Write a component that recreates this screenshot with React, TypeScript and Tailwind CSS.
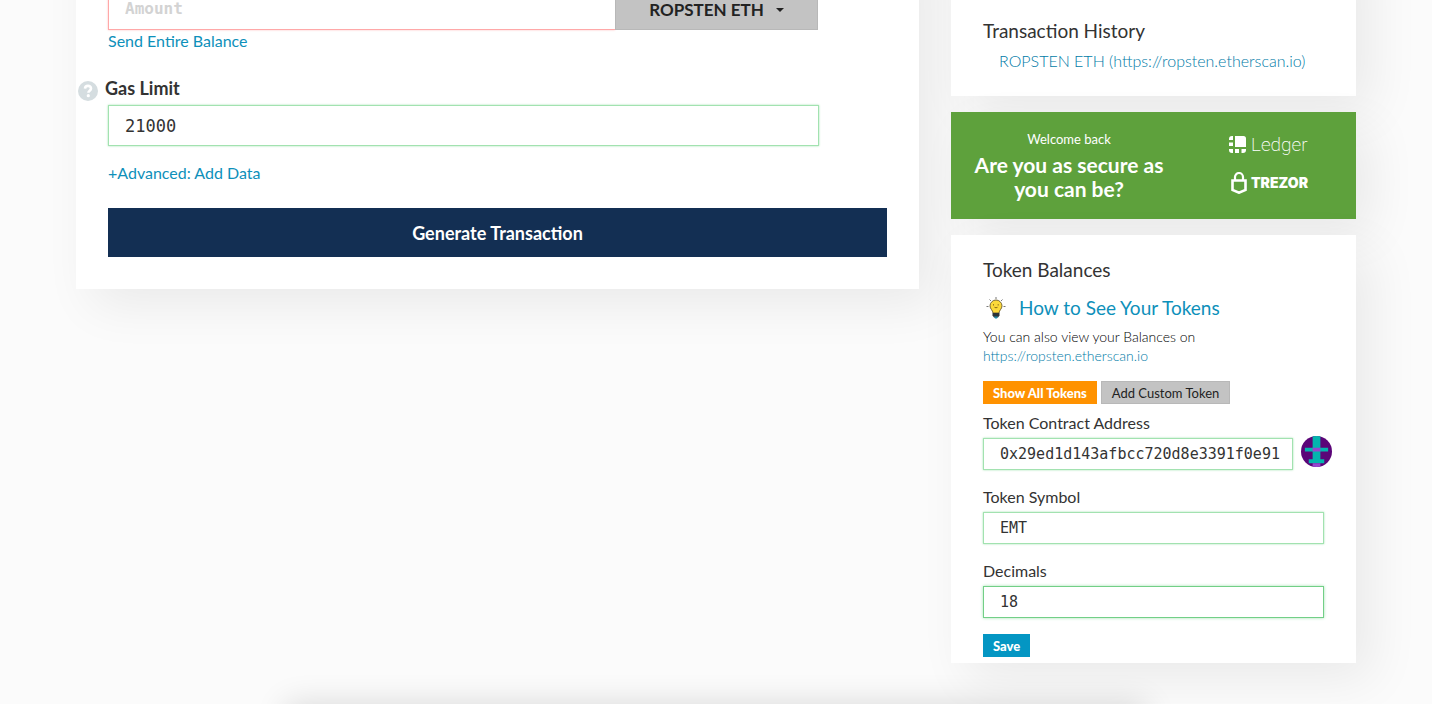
import React from "react";

const cardShadow = "shadow-[16px_16px_47px_0_rgba(0,0,0,0.07)]";
const link = "text-[#0e90ba] hover:underline";
const lightLink = "text-[#007ba7] hover:underline";
const field =
  "block w-full border border-[#a2e2b0] bg-white pr-2 pl-4 font-['DejaVu_Sans_Mono',monospace] text-[#333] shadow-[0_0_2px_0_#a2e2b0] outline-none";
const smallField = field + " h-8 text-[15px]";

function HelpIcon() {
  return (
    <svg viewBox="0 0 20 20" className="size-5" aria-hidden="true">
      <circle cx="10" cy="10" r="10" fill="#d5dde0" />
      <path d="M7 7.6C7.1 5.800 8.300 4.900 10 4.900s3 1 3 2.600c0 2.200-2.600 2.200-2.600 4.300" fill="none" stroke="#fff" strokeWidth="2.600" />
      <circle cx="10.300" cy="14.700" r="1.600" fill="#fff" />
    </svg>
  );
}

function BulbIcon() {
  return (
    <svg viewBox="0 0 20 22" className="h-[22px] w-5" aria-hidden="true">
      <g stroke="#777" strokeWidth="1">
        <path d="M10 0v2M3.500 2.500l1.500 1.500M16.500 2.500L15 4M.5 9.500h2M17.500 9.500h2" />
      </g>
      <path d="M10 3a6 6 0 0 0-6 5.900c0 3 2.800 4.300 3 7.100h6c.2-2.800 3-4.100 3-7.100A6 6 0 0 0 10 3z" fill="#fcd93a" stroke="#6b5a2c" strokeWidth=".9" />
      <path d="M7.500 7.200v1.300M12.200 7.200v1.300M8.500 10.300q1.500 1 3 0" fill="none" stroke="#7a5b12" strokeWidth=".9" />
      <path d="M6.500 16h7v2.500L12 20.500H8L6.500 18.500z" fill="#2b3338" />
      <path d="M8 19.500h4l-1 2H9z" fill="#1d8aa8" />
    </svg>
  );
}

function Identicon() {
  return (
    <svg viewBox="0 0 8 8" className="-mt-0.5 size-[31px] shrink-0 rounded-full" role="img" aria-label="Address icon">
      <path fill="#5b0578" d="M0 0h8v8H0z" />
      <path fill="#04b5ae" d="M3 0h2v7H3zM1 3h6v1H1zM2 6h4v1H2z" />
      <path fill="#9647cf" d="M3 3h2v1H3zM3 7h2v1H3z" />
    </svg>
  );
}

function LedgerLogo() {
  return (
    <div className="flex h-6 items-center gap-[5px]">
      <svg viewBox="0 0 17 17" className="size-[17px]" fill="#fff" aria-hidden="true">
        <path d="M6 0h8.500A2.500 2.500 0 0 1 17 2.500V11H6zM3 0h1v4H0V3a3 3 0 0 1 3-3zM0 6.500h4V10H0zM0 13h4v4H3a3 3 0 0 1-3-3zM6 13h4v4H6zM12.500 13H17v1a3 3 0 0 1-3 3h-1.500z" />
      </svg>
      <span className="font-[Roboto,sans-serif] text-[19px] leading-6 font-extralight">Ledger</span>
    </div>
  );
}

function TrezorLogo() {
  return (
    <div className="flex h-6 items-center gap-1 pl-0.5">
      <svg viewBox="0 0 16 22" className="h-[22px] w-4" fill="none" stroke="#fff" aria-hidden="true">
        <path d="M4 8.500V5a4 4 0 0 1 8 0v3.500" strokeWidth="2.200" />
        <path d="M1.500 8.500h13v9.500L8 20.700 1.500 18z" strokeWidth="2.600" />
      </svg>
      <span className="font-[Inter,sans-serif] text-sm leading-6 font-black">TREZOR</span>
    </div>
  );
}

export default function App() {
  return (
    <div className="flex min-h-screen flex-col overflow-hidden bg-[#fbfbfb] font-[Lato,sans-serif] text-[#333]">
      <div className="flex items-start gap-8 px-[76px]">
        <main className={"-mt-16 min-w-0 flex-1 bg-white px-8 pt-[52px] pb-8 " + cardShadow}>
          <div className="mr-[69px] flex h-[42px]">
            <input
              aria-label="Amount"
              placeholder="Amount"
              className="min-w-0 flex-1 border border-r-0 border-[#ffa8a8] bg-white px-4 font-['DejaVu_Sans_Mono',monospace] text-base font-bold shadow-[0_0_2px_0_#ffc0c0] outline-none placeholder:text-[#d3d3d3]"
            />
            <button className="flex w-[203px] items-center justify-center gap-3 border border-[#b8b8b8] bg-[#c3c3c3] text-[17px] leading-none font-bold text-[#222]">
              ROPSTEN ETH
              <svg viewBox="0 0 8 4" className="mt-0.5 h-1 w-2" fill="#222" aria-hidden="true">
                <path d="M0 0h8L4 4z" />
              </svg>
            </button>
          </div>
          <a href="#balance" className={"block w-fit text-base leading-[22px] " + link}>
            Send Entire Balance
          </a>
          <div className="mt-[26px] -ml-8 flex h-[27px] items-start gap-[7px] pl-0.5">
            <button aria-label="Help" className="pt-[3px]">
              <HelpIcon />
            </button>
            <label htmlFor="gas" className="text-lg leading-5 font-bold">
              Gas Limit
            </label>
          </div>
          <div className="mr-[68px]">
            <input id="gas" defaultValue="21000" className={field + " h-[41px] text-[17px]"} />
          </div>
          <a href="#data" className={"mt-4 block w-fit text-base leading-[22px] " + link}>
            +Advanced: Add Data
          </a>
          <button className="mt-6 block h-[49px] w-full bg-[#132f53] text-lg font-bold text-white">
            Generate Transaction
          </button>
        </main>

        <aside className="flex w-[405px] shrink-0 flex-col gap-4">
          <section className={"-mt-16 bg-white px-8 pt-[82px] pb-[18px] " + cardShadow}>
            <h2 className="text-[19px] leading-[26px]">Transaction History</h2>
            <a href="#history" className={"ml-4 block text-base leading-[34px] font-light " + lightLink}>
              ROPSTEN ETH (https://ropsten.etherscan.io)
            </a>
          </section>

          <section className={"flex h-[107px] items-center bg-[#5ea13c] text-white " + cardShadow}>
            <div className="w-[236px] pb-0.5 text-center">
              <p className="text-[13px] leading-5">Welcome back</p>
              <p className="mt-1 text-[21px] leading-6 font-bold">
                Are you as secure as
                <br />
                you can be?
              </p>
            </div>
            <div className="ml-[42px] flex flex-col gap-3.5 pb-1">
              <LedgerLogo />
              <TrezorLogo />
            </div>
          </section>

          <section className={"bg-white px-8 pt-5 pb-1.5 " + cardShadow}>
            <h2 className="text-[19px] leading-[30px]">Token Balances</h2>
            <a href="#tokens" className={"mt-2.5 flex h-[26px] items-center gap-[13px] pl-[3px] text-[19px] " + link}>
              <BulbIcon />
              How to See Your Tokens
            </a>
            <p className="mt-1.5 text-sm leading-[19px] font-light text-black">
              You can also view your Balances on
              <br />
              <a href="#etherscan" className={lightLink}>
                https://ropsten.etherscan.io
              </a>
            </p>
            <div className="mt-4 flex gap-1">
              <button className="h-[23px] bg-[#ff9200] px-2.5 text-[13px] leading-5 font-black text-white">Show All Tokens</button>
              <button className="h-[23px] border border-[#b8b8b8] bg-[#c3c3c3] px-2.5 text-[13px] leading-5 text-[#222]">Add Custom Token</button>
            </div>

            <label htmlFor="address" className="mt-1.5 block text-base leading-[26px]">
              Token Contract Address
            </label>
            <div className="mt-0.5 -mr-2 flex gap-2">
              <input id="address" defaultValue="0x29ed1d143afbcc720d8e3391f0e91" className={smallField + " min-w-0 flex-1"} />
              <Identicon />
            </div>
            <label htmlFor="symbol" className="mt-3.5 block text-base leading-[26px]">
              Token Symbol
            </label>
            <input id="symbol" defaultValue="EMT" className={"mt-0.5 " + smallField} />
            <label htmlFor="decimals" className="mt-3.5 block text-base leading-[26px]">
              Decimals
            </label>
            <input
              id="decimals"
              defaultValue="18"
              className="mt-0.5 block h-8 w-full border border-[#72cf87] bg-white px-4 font-['DejaVu_Sans_Mono',monospace] text-[15px] text-[#333] shadow-[0_0_3px_0_#a2e2b0] outline-none"
            />
            <button className="mt-4 block h-[23px] bg-[#0496c3] px-2.5 text-[13px] leading-5 font-black text-white">Save</button>
          </section>
        </aside>
      </div>
      <footer className="mx-auto mt-auto -mb-16 h-16 w-3/5 bg-white shadow-[0_0_32px_0_rgba(0,0,0,0.14)]" />
    </div>
  );
}
